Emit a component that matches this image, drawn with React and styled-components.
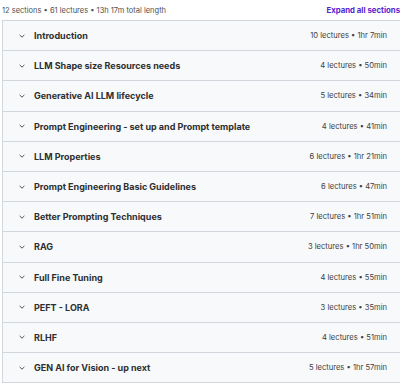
import React from "react";
import styled, { createGlobalStyle } from "styled-components";

const Global = createGlobalStyle`
  html, body { margin: 0; padding: 0; background: #fff; overflow: hidden; }
  body { font-family: Inter, "Noto Sans", sans-serif; color: #2d2f31; }
`;

const Page = styled.div`
  width: 400px;
  height: 383px;
  overflow: hidden;
`;

const Header = styled.div`
  display: flex;
  justify-content: space-between;
  align-items: center;
  height: 20px;
  padding-left: 2px;
`;

const Summary = styled.span`
  font-size: 7.5px;
  color: #4b4f52;
`;

const Expand = styled.span`
  font-size: 7.8px;
  font-weight: 700;
  color: #5624d0;
  white-space: nowrap;
`;

const List = styled.div`
  margin-left: 2px;
  width: 410px;
  border: 1px solid #d1d7dc;
  border-bottom: none;
`;

const Row = styled.div`
  display: flex;
  align-items: center;
  height: 29.2px;
  background: #f7f9fa;
  border-bottom: 1px solid #d1d7dc;
  padding-left: 16px;
  padding-right: 25px;
  box-sizing: content-box;
  width: 368px;
`;

const Chevron = styled.svg`
  width: 6px;
  height: 6px;
  flex: none;
  margin-right: 9px;
`;

const Title = styled.span`
  flex: 1;
  font-size: 9px;
  font-weight: 700;
  color: #2d2f31;
  white-space: nowrap;
`;

const Meta = styled.span`
  font-size: 7.6px;
  color: #3e4143;
  white-space: nowrap;
`;

const sections = [
  ["Introduction", "10 lectures • 1hr 7min"],
  ["LLM Shape size Resources needs", "4 lectures • 50min"],
  ["Generative AI LLM lifecycle", "5 lectures • 34min"],
  ["Prompt Engineering - set up and Prompt template", "4 lectures • 41min"],
  ["LLM Properties", "6 lectures • 1hr 21min"],
  ["Prompt Engineering Basic Guidelines", "6 lectures • 47min"],
  ["Better Prompting Techniques", "7 lectures • 1hr 51min"],
  ["RAG", "3 lectures • 1hr 50min"],
  ["Full Fine Tuning", "4 lectures • 55min"],
  ["PEFT - LORA", "3 lectures • 35min"],
  ["RLHF", "4 lectures • 51min"],
  ["GEN AI for Vision - up next", "5 lectures • 1hr 57min"],
];

export default function App() {
  return (
    <Page>
      <Global />
      <Header>
        <Summary>12 sections • 61 lectures • 13h 17m total length</Summary>
        <Expand>Expand all sections</Expand>
      </Header>
      <List>
        {sections.map(([t, m]) => (
          <Row key={t}>
            <Chevron viewBox="0 0 6 6">
              <polyline points="0.6,1.9 3,4.2 5.4,1.9" fill="none" stroke="#3e4143" strokeWidth="0.9" />
            </Chevron>
            <Title>{t}</Title>
            <Meta>{m}</Meta>
          </Row>
        ))}
      </List>
    </Page>
  );
}
